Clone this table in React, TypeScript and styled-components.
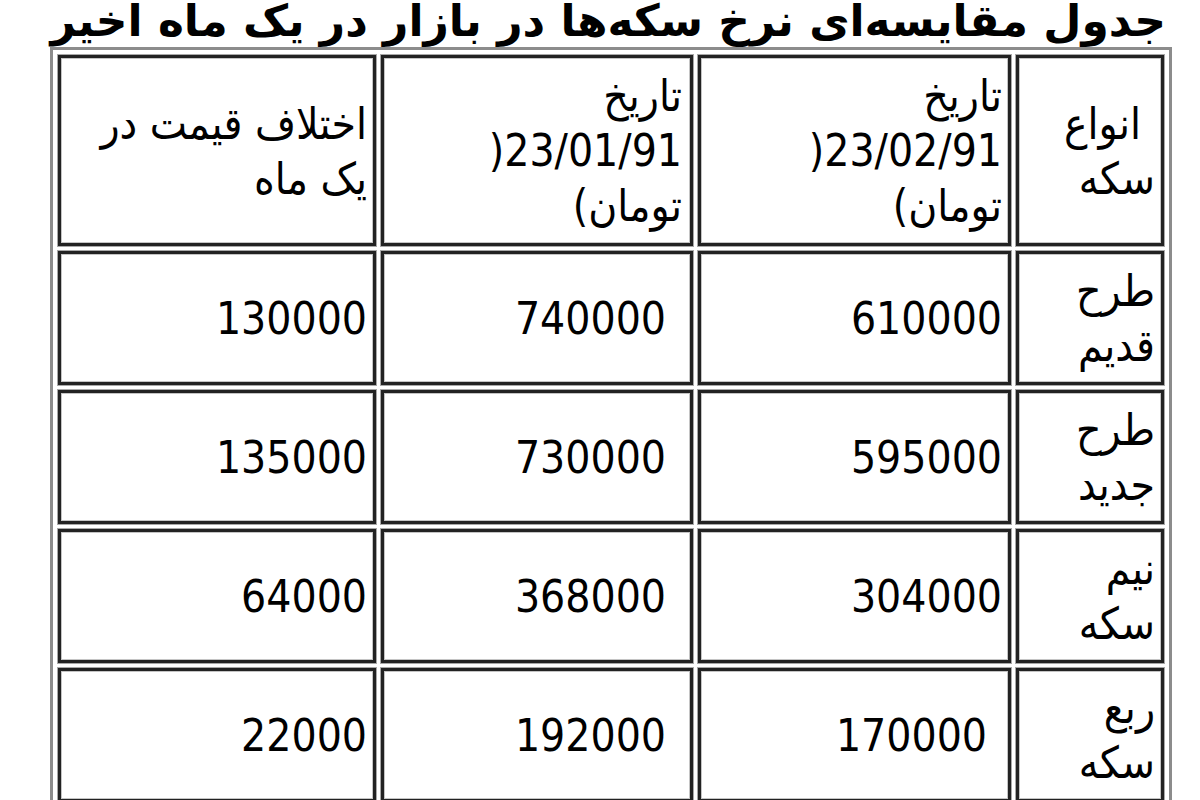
import React from "react";
import styled, { createGlobalStyle } from "styled-components";

const GlobalStyle = createGlobalStyle`
  html, body {
    margin: 0;
    padding: 0;
    background: #ffffff;
  }
  body {
    font-family: "DejaVu Sans", "Noto Sans", sans-serif;
    color: #000000;
  }
`;

const Page = styled.div`
  direction: rtl;
  width: 1200px;
  height: 800px;
  overflow: hidden;
  padding: 0 28px 0 51px;
  box-sizing: border-box;
`;

const Title = styled.h1`
  margin: 0;
  height: 47px;
  line-height: 42px;
  font-family: "DejaVu Sans", sans-serif;
  font-size: 44px;
  font-weight: bold;
  white-space: nowrap;
  text-align: right;
  padding-right: 6px;
`;

const Table = styled.table`
  direction: rtl;
  table-layout: fixed;
  width: 1121px;
  border-collapse: separate;
  border-spacing: 5px;
  border: 3px solid #8c8c8c;
  font-family: "DejaVu Sans Condensed", "DejaVu Sans", sans-serif;
  font-size: 44px;
  line-height: 55px;
`;

const Cell = styled.td<{ $tall?: boolean; $inset?: number }>`
  height: ${(p) => (p.$tall ? 185 : 128)}px;
  padding: 0 ${(p) => 6 + (p.$inset ?? 0)}px 0 6px;
  border: 3px solid #222222;
  box-shadow: 0 0 0 1px #a8a8a8, inset 0 0 0 1px #c4c4c4;
  text-align: right;
  vertical-align: middle;
  white-space: nowrap;
`;

const Line = styled.div<{ $inset?: number }>`
  padding-right: ${(p) => p.$inset ?? 0}px;
`;

type Row = {
  name: [string, string];
  current: string;
  previous: string;
  diff: string;
  currentInset?: number;
};

const rows: Row[] = [
  { name: ["طرح", "قدیم"], current: "610000", previous: "740000", diff: "130000" },
  { name: ["طرح", "جدید"], current: "595000", previous: "730000", diff: "135000" },
  { name: ["نیم", "سکه"], current: "304000", previous: "368000", diff: "64000" },
  { name: ["ربع", "سکه"], current: "170000", previous: "192000", diff: "22000", currentInset: 15 },
];

export default function App() {
  return (
    <>
      <GlobalStyle />
      <Page>
        <Title>جدول مقایسه‌ای نرخ سکه‌ها در بازار در یک ماه اخیر</Title>
        <Table>
          <colgroup>
            <col style={{ width: 148 }} />
            <col style={{ width: 313 }} />
            <col style={{ width: 312 }} />
            <col style={{ width: 318 }} />
          </colgroup>
          <tbody>
            <tr>
              <Cell $tall>
                <Line $inset={14}>انواع</Line>
                <Line>سکه</Line>
              </Cell>
              <Cell $tall>
                <Line>تاریخ</Line>
                <Line>23/02/91(</Line>
                <Line>تومان)</Line>
              </Cell>
              <Cell $tall $inset={2}>
                <Line>تاریخ</Line>
                <Line>23/01/91(</Line>
                <Line>تومان)</Line>
              </Cell>
              <Cell $tall>
                <Line>اختلاف قیمت در</Line>
                <Line>یک ماه</Line>
              </Cell>
            </tr>
            {rows.map((r) => (
              <tr key={r.name.join(" ") + r.current}>
                <Cell>
                  <Line>{r.name[0]}</Line>
                  <Line>{r.name[1]}</Line>
                </Cell>
                <Cell $inset={r.currentInset}>{r.current}</Cell>
                <Cell $inset={18}>{r.previous}</Cell>
                <Cell>{r.diff}</Cell>
              </tr>
            ))}
          </tbody>
        </Table>
      </Page>
    </>
  );
}
